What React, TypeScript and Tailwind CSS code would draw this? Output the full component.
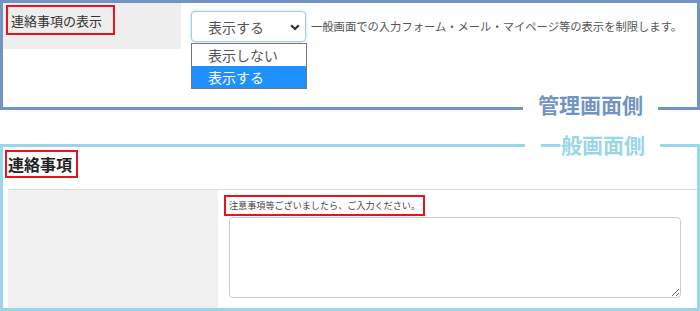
import React from "react";

export default function App() {
  return (
    <div className="w-[700px] h-[311px] bg-white overflow-hidden font-['Noto_Sans_CJK_JP','Noto_Sans',sans-serif]">
      {/* 管理画面側 */}
      <div className="relative h-[110px] border-[3px] border-[#7294c2]">
        <div className="flex">
          <div className="w-[178px] h-[46px] bg-[#eeeeee] pl-[3px] pt-[2px]">
            <div className="w-[109px] h-[30px] border-2 border-[#e8141c] flex items-center pl-[3px] text-[13px] leading-none text-[#333]">
              連絡事項の表示
            </div>
          </div>
          <div className="flex items-center pl-[10px] pt-[8px] h-[39px] self-start">
            <div className="relative w-[115px] h-[31px] border border-[#a9cbe9] rounded-[4px] shadow-[0_0_3px_rgba(102,175,233,0.5)] bg-white flex items-center pl-[16px] text-[14px] leading-none text-[#555]">
              表示する
              <svg className="absolute right-[5px] top-[12px]" width="10" height="7" viewBox="0 0 10 7">
                <path d="M1.2 1.2 L5 5 L8.8 1.2" fill="none" stroke="#333" strokeWidth="2.2" />
              </svg>
              <div className="absolute left-[-1px] top-[31px] w-[116px] border border-[#767676] bg-white z-10">
                <div className="h-[22px] flex items-center pl-[16px] text-[14px] leading-none text-[#555]">表示しない</div>
                <div className="h-[22px] flex items-center pl-[16px] text-[14px] leading-none text-white bg-[#1e90ff]">表示する</div>
              </div>
            </div>
            <span className="ml-[5px] text-[11.3px] leading-none text-[#555] whitespace-nowrap">
              一般画面での入力フォーム・メール・マイページ等の表示を制限します。
            </span>
          </div>
        </div>
        <div className="absolute right-[39px] top-[90px] h-[22px] px-[15px] bg-white flex items-center text-[21px] font-bold leading-none text-[#7294c2]">
          管理画面側
        </div>
      </div>

      {/* 一般画面側 */}
      <div className="relative mt-[34px] h-[167px] border-[3px] border-[#99d6e8] flex flex-col">
        <div className="ml-[2px] mt-[3px] w-[73px] h-[28px] border-2 border-[#e8141c] flex items-center pl-[1px] text-[16px] font-bold leading-none text-[#222]">
          連絡事項
        </div>
        <div className="ml-[5px] mt-[11px] flex border-t border-[#dddddd] flex-1">
          <div className="w-[210px] bg-[#f1f1f1]" />
          <div className="flex-1 pl-[6px] pt-[5px] flex flex-col items-start">
            <div className="flex items-center h-[21px] border-2 border-[#e8141c] px-[3px] text-[9.1px] leading-none text-[#444] whitespace-nowrap">
              注意事項等ございましたら、ご入力ください。
            </div>
            <textarea className="block ml-[5px] mt-[1px] w-[452px] h-[81px] border border-[#cccccc] rounded-[4px] bg-white" />
          </div>
        </div>
        <div className="absolute right-[37px] top-[-14px] h-[23px] px-[15px] bg-white flex items-center text-[21px] font-bold leading-none text-[#9ad6e8]">
          一般画面側
        </div>
      </div>
    </div>
  );
}
